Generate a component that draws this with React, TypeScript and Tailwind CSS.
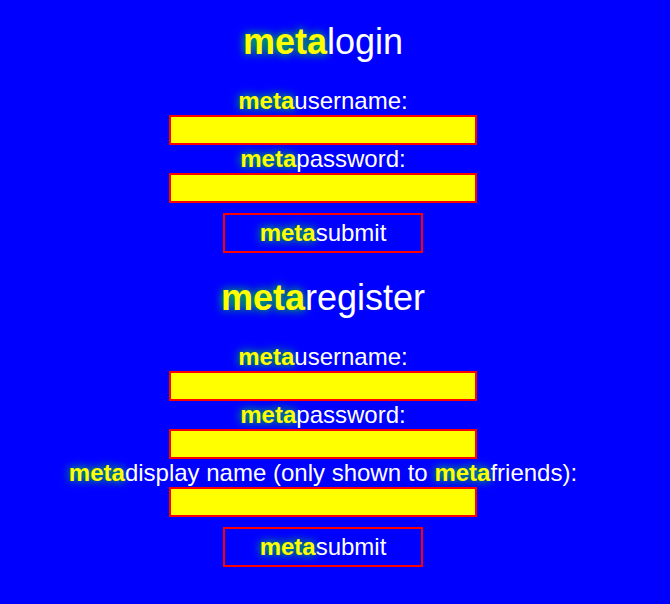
import type { ReactNode } from "react";

function Meta() {
  return (
    <b className="font-bold text-[#ffff00] [text-shadow:0_0_10px_#00ff00]">meta</b>
  );
}

function Field({ id, type, children }: { id: string; type: string; children: ReactNode }) {
  return (
    <div className="flex w-full flex-col items-center">
      <label htmlFor={id} className="text-center leading-7">
        <Meta />
        {children}
      </label>
      <input
        id={id}
        type={type}
        className="block h-[30px] w-[308px] max-w-full border-2 border-[#ff0000] bg-[#ffff00] px-1 text-black outline-none"
      />
    </div>
  );
}

function Form({ title, children }: { title: string; children: ReactNode }) {
  return (
    <form className="flex flex-col items-center" onSubmit={(e) => e.preventDefault()}>
      <h1 className="mb-6 text-4xl leading-[42px]">
        <Meta />
        {title}
      </h1>
      {children}
      <button
        type="submit"
        className="mt-[10px] h-10 w-[200px] border-2 border-[#ff0000] text-2xl"
      >
        <Meta />
        submit
      </button>
    </form>
  );
}

export default function App() {
  return (
    <main className="flex min-h-screen flex-col gap-6 bg-[#0000ff] pt-[21px] pr-6 text-2xl text-white [font-family:'Liberation_Sans',Arial,sans-serif]">
      <Form title="login">
        <Field id="login-username" type="text">username:</Field>
        <Field id="login-password" type="password">password:</Field>
      </Form>
      <Form title="register">
        <Field id="register-username" type="text">username:</Field>
        <Field id="register-password" type="password">password:</Field>
        <Field id="register-display" type="text">
          display name (only shown to <Meta />
          friends):
        </Field>
      </Form>
    </main>
  );
}
